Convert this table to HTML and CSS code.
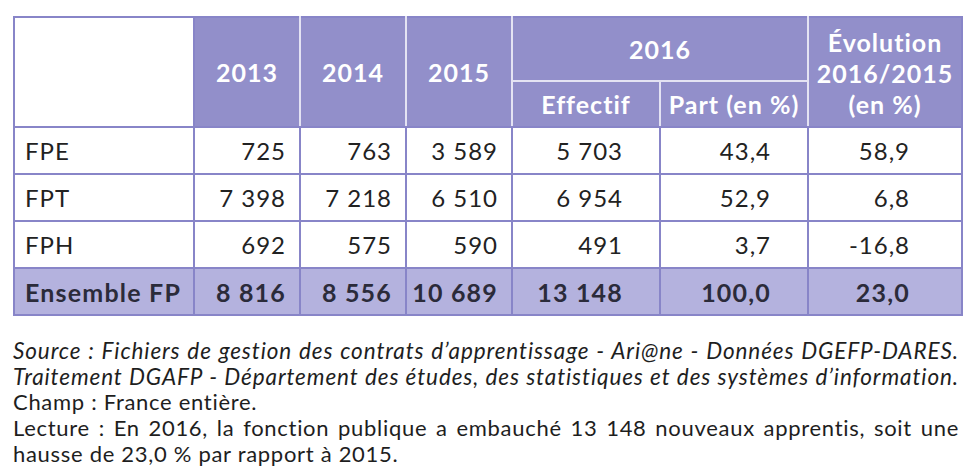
FILE: index.html
```html
<!DOCTYPE html>
<html lang="fr">
<head>
<meta charset="utf-8">
<link rel="stylesheet" href="styles.css">
</head>
<body>
<div class="page">
  <table class="data">
    <colgroup>
      <col class="c-label"><col class="c-year"><col class="c-year"><col class="c-year"><col class="c-part"><col class="c-part"><col class="c-evo">
    </colgroup>
    <thead>
      <tr class="h1">
        <th class="corner" rowspan="2"></th>
        <th rowspan="2">2013</th>
        <th rowspan="2">2014</th>
        <th rowspan="2">2015</th>
        <th colspan="2">2016</th>
        <th rowspan="2" class="evo">Évolution<br>2016/2015<br>(en %)</th>
      </tr>
      <tr class="h2">
        <th>Effectif</th>
        <th>Part (en %)</th>
      </tr>
    </thead>
    <tbody>
      <tr>
        <td class="lbl">FPE</td><td>725</td><td>763</td><td>3 589</td><td class="wide">5 703</td><td class="wide">43,4</td><td class="evo-v">58,9</td>
      </tr>
      <tr>
        <td class="lbl">FPT</td><td>7 398</td><td>7 218</td><td>6 510</td><td class="wide">6 954</td><td class="wide">52,9</td><td class="evo-v">6,8</td>
      </tr>
      <tr>
        <td class="lbl">FPH</td><td>692</td><td>575</td><td>590</td><td class="wide">491</td><td class="wide">3,7</td><td class="evo-v">-16,8</td>
      </tr>
      <tr class="total">
        <td class="lbl">Ensemble FP</td><td>8 816</td><td>8 556</td><td>10 689</td><td class="wide">13 148</td><td class="wide">100,0</td><td class="evo-v">23,0</td>
      </tr>
    </tbody>
  </table>
  <div class="notes">
    <p class="line just it">Source : Fichiers de gestion des contrats d’apprentissage - Ari@ne - Données DGEFP-DARES.</p>
    <p class="line just it">Traitement DGAFP - Département des études, des statistiques et des systèmes d’information.</p>
    <p class="line">Champ : France entière.</p>
    <p class="line just">Lecture : En 2016, la fonction publique a embauché 13 148 nouveaux apprentis, soit une</p>
    <p class="line">hausse de 23,0 % par rapport à 2015.</p>
  </div>
</div>
</body>
</html>
```
FILE: styles.css
```css
html, body {
  margin: 0;
  padding: 0;
  background: #ffffff;
}
body {
  font-family: "Lato", "Open Sans", sans-serif;
  color: #222222;
}
.page {
  padding: 16px 11px 0 13px;
}
.data {
  border-collapse: collapse;
  table-layout: fixed;
  width: 950px;
  border: 2px solid #8885c8;
}
.c-label { width: 180px; }
.c-year { width: 106px; }
.c-part { width: 148px; }
.c-evo { width: 154px; }

.data th {
  background: #928fca;
  color: #ffffff;
  font-weight: 700;
  font-size: 25px;
  letter-spacing: 1px;
  text-align: center;
  border: 2px solid #e4e3f3;
  padding: 0;
  line-height: 30px;
}
.data thead tr:first-child th { border-top: 2px solid #8885c8; }
.data th:last-child { border-right: 2px solid #8885c8; }
.data th.corner {
  background: #ffffff;
  border: 2px solid #8885c8;
}
.data tr.h1 { height: 64px; }
.data tr.h2 { height: 46px; }
.data thead th { border-bottom: 2px solid #8885c8; }
.data tr.h1 th[colspan] { border-bottom: 2px solid #e4e3f3; }
.data th.evo { line-height: 31px; padding-top: 2px; }

.data tbody tr { height: 47px; }
.data td {
  border: 2px solid #8885c8;
  font-size: 24px;
  letter-spacing: 1px;
  text-align: right;
  padding: 0 13px 0 0;
  color: #222222;
}
.data td.lbl { text-align: left; padding: 0 0 0 10px; }
.data td.wide { padding-right: 36px; }
.data td.evo-v { padding-right: 51px; }
.data tr.total td {
  background: #b4b2de;
  font-weight: 700;
  font-size: 25px;
  letter-spacing: 1.2px;
  color: #2b2b3a;
}

.notes {
  margin-top: 22px;
  width: 946px;
  font-size: 22px;
  letter-spacing: 0.7px;
  line-height: 25.7px;
  color: #1e1e1e;
}
.line { margin: 0; white-space: nowrap; }
.it { font-style: italic; font-size: 22.5px; letter-spacing: 0.9px; }
.just { text-align: justify; text-align-last: justify; white-space: normal; }
```
